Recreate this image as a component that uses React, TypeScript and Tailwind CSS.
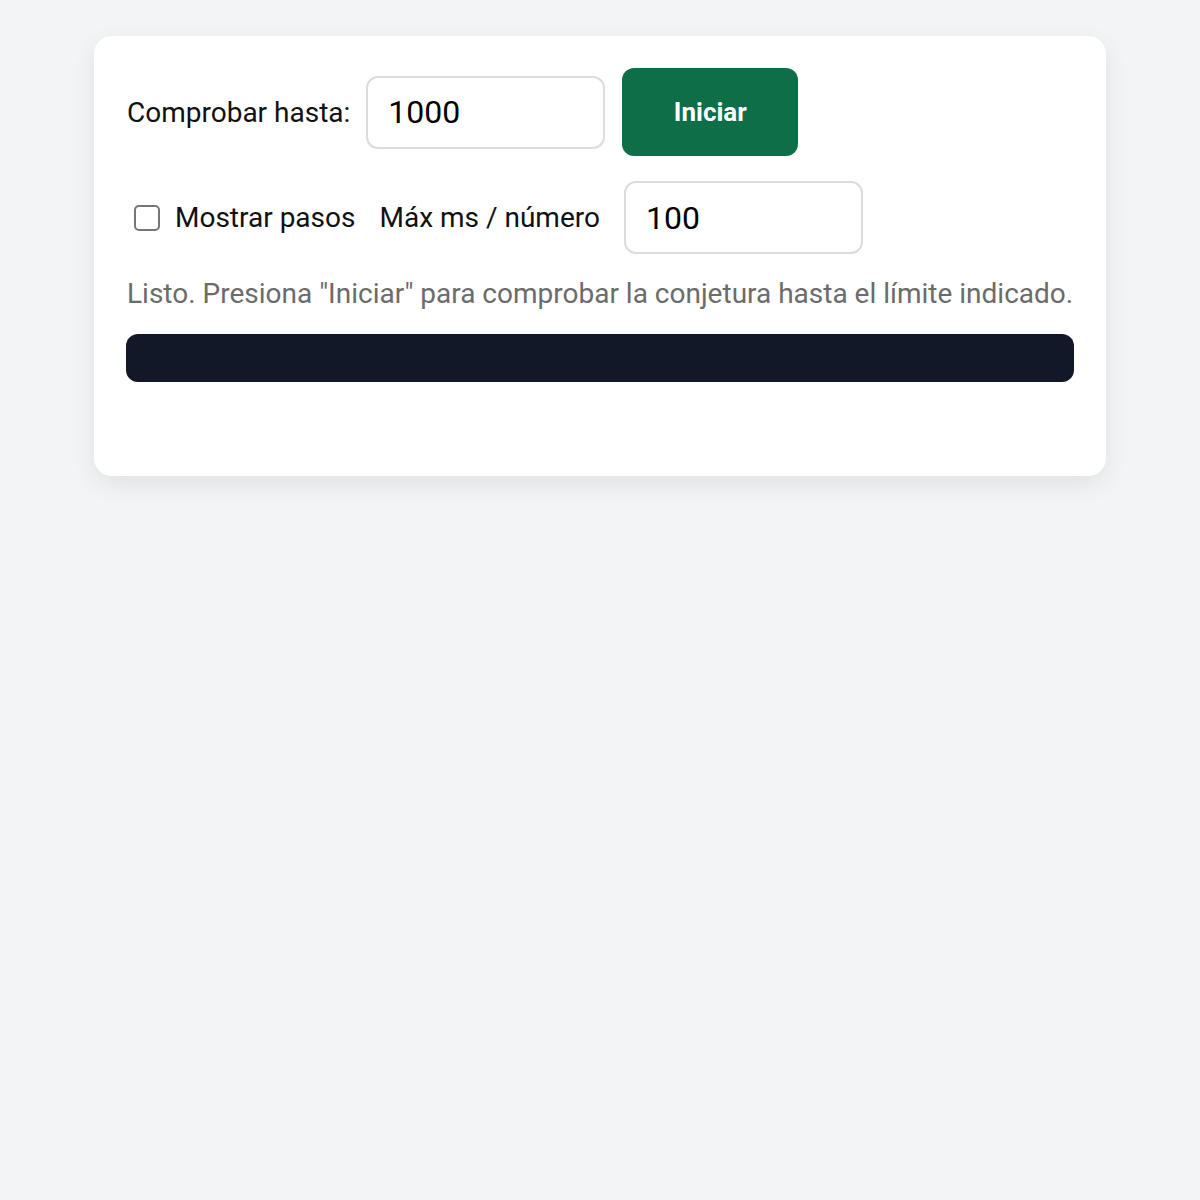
import React from "react";

export default function App() {
  return (
    <div className="min-h-[1200px] w-full bg-[#f3f4f6] pt-[36px]" style={{ fontFamily: "Roboto, 'Noto Sans', sans-serif" }}>
      <div className="mx-auto w-[1012px] h-[440px] rounded-[18px] bg-white px-[32px] pt-[32px] shadow-[0_8px_24px_rgba(0,0,0,0.08)]">
        <div className="flex items-center gap-[16px]">
          <span className="text-[28px] text-[#111111] ml-[1px] mt-[1px]">Comprobar hasta:</span>
          <div className="flex h-[73px] w-[239px] items-center rounded-[12px] border-2 border-[#dcdcdc] px-[20px] text-[32px] text-black">
            1000
          </div>
          <button className="ml-[1px] h-[88px] w-[176px] rounded-[12px] bg-[#0d6e47] text-[26px] font-bold text-white">
            Iniciar
          </button>
        </div>
        <div className="mt-[25px] flex items-center">
          <div className="ml-[8px] h-[26px] w-[26px] rounded-[5px] border-2 border-[#767676] bg-white" />
          <span className="ml-[15px] text-[28px] text-[#111111]">Mostrar pasos</span>
          <span className="ml-[24px] text-[28px] text-[#111111]">Máx ms / número</span>
          <div className="ml-[24px] flex h-[73px] w-[239px] items-center rounded-[12px] border-2 border-[#dcdcdc] px-[20px] text-[32px] text-black">
            100
          </div>
        </div>
        <p className="mt-[22px] text-[28px] leading-[36px] text-[#6b6b6b] ml-[1px]">
          Listo. Presiona "Iniciar" para comprobar la conjetura hasta el límite indicado.
        </p>
        <div className="mt-[22px] h-[48px] w-full rounded-[12px] bg-[#111827]" />
      </div>
    </div>
  );
}
